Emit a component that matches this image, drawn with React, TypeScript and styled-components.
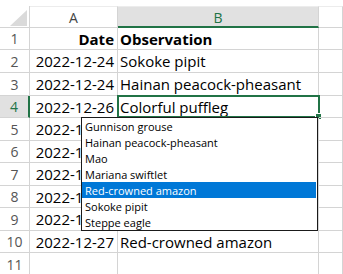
import React from 'react';
import styled, { createGlobalStyle } from 'styled-components';

const GlobalStyle = createGlobalStyle`
  html, body {
    margin: 0;
    padding: 0;
    background: #fff;
  }
  body {
    font-family: "Open Sans", "Liberation Sans", sans-serif;
    overflow: hidden;
  }
`

const GREEN = '#217346';
const GRID = '#d4d4d4';

const rowHeights = [22, 23, 23, 22, 23, 22, 23, 22, 23, 22, 23];

// rows 5-9 of column B sit under the open list, so they show nothing
const rows = [
  { date: 'Date', obs: 'Observation', bold: true },
  { date: '2022-12-24', obs: 'Sokoke pipit' },
  { date: '2022-12-24', obs: 'Hainan peacock-pheasant' },
  { date: '2022-12-26', obs: 'Colorful puffleg' },
  { date: '2022-12-26', obs: '' },
  { date: '2022-12-26', obs: '' },
  { date: '2022-12-27', obs: '' },
  { date: '2022-12-27', obs: '' },
  { date: '2022-12-27', obs: '' },
  { date: '2022-12-27', obs: 'Red-crowned amazon' },
  { date: '', obs: '' },
];

const options = [
  'Gunnison grouse',
  'Hainan peacock-pheasant',
  'Mao',
  'Mariana swiftlet',
  'Red-crowned amazon',
  'Sokoke pipit',
  'Steppe eagle',
];

const SELECTED_ROW = 4;
const HIGHLIGHT = 4;

const Sheet = styled.div`
  position: relative;
  padding-top: 6px;
  display: grid;
  grid-template-columns: 30px 88px 201px 1fr;
  grid-template-rows: 22px ${rowHeights.map(h => `${h}px`).join(' ')};
  width: 343px;
  height: 274px;
  box-sizing: border-box;
  overflow: hidden;
`

const Corner = styled.div`
  position: relative;
  border-right: 1px solid ${GRID};
  border-bottom: 1px solid ${GRID};
  box-sizing: border-box;

  &::after {
    content: '';
    position: absolute;
    left: 10px;
    top: 4px;
    width: 17px;
    height: 16px;
    background: #dadada;
    clip-path: polygon(100% 0, 100% 100%, 0 100%);
  }
`

const ColHeader = styled.div<{ active?: boolean }>`
  display: flex;
  align-items: center;
  justify-content: center;
  box-sizing: border-box;
  font-size: 14px;
  padding-top: 1px;
  color: ${p => p.active ? GREEN : '#444'};
  background: ${p => p.active ? '#e1e1e1' : '#fff'};
  border-top: 1px solid #ececec;
  border-right: 1px solid ${GRID};
  border-bottom: ${p => p.active ? `2px solid ${GREEN}` : `1px solid ${GRID}`};
`

const RowHeader = styled.div<{ active?: boolean }>`
  display: flex;
  align-items: center;
  justify-content: center;
  box-sizing: border-box;
  font-size: 14px;
  color: ${p => p.active ? GREEN : '#555'};
  background: ${p => p.active ? '#e1e1e1' : '#fff'};
  border-right: ${p => p.active ? `2px solid ${GREEN}` : `1px solid ${GRID}`};
  border-bottom: 1px solid ${GRID};
`

const Cell = styled.div<{ align?: 'left' | 'right'; bold?: boolean }>`
  position: relative;
  display: flex;
  align-items: center;
  justify-content: ${p => p.align === 'right' ? 'flex-end' : 'flex-start'};
  box-sizing: border-box;
  padding: ${p => p.align === 'right' ? '0 3px 0 0' : '0 0 0 2px'};
  font-size: 15px;
  font-weight: ${p => p.bold ? 700 : 400};
  color: #000;
  white-space: nowrap;
  overflow: visible;
  border-right: 1px solid ${GRID};
  border-bottom: 1px solid ${GRID};
`

const Selection = styled.div`
  position: absolute;
  left: -1px;
  top: -1px;
  right: -2px;
  bottom: -1px;
  border: 2px solid ${GREEN};
  pointer-events: none;
`

const FillHandle = styled.div`
  position: absolute;
  right: -4px;
  bottom: -4px;
  width: 5px;
  height: 5px;
  background: ${GREEN};
  border: 1px solid #fff;
`

const Dropdown = styled.ul`
  position: absolute;
  left: 81px;
  top: 117px;
  width: 237px;
  height: 114px;
  box-sizing: border-box;
  margin: 0;
  padding: 0;
  list-style: none;
  background: #fff;
  border: 1px solid #1a1a1a;
  z-index: 2;
`

const Option = styled.li<{ highlighted?: boolean }>`
  height: 16px;
  line-height: 16px;
  padding: 1px 0 0 3px;
  margin-right: 1px;
  box-sizing: border-box;
  font-size: 11px;
  white-space: nowrap;
  color: ${p => p.highlighted ? '#fff' : '#000'};
  background: ${p => p.highlighted ? '#0078d7' : 'transparent'};
`

export default function App() {
  return (
    <>
      <GlobalStyle />
      <Sheet>
        <Corner />
        <ColHeader>A</ColHeader>
        <ColHeader active>B</ColHeader>
        <ColHeader />
        {
          rows.map((row, idx) => {
            const n = idx + 1;
            const selected = n === SELECTED_ROW;
            return (
              <React.Fragment key={`row-${n}`}>
                <RowHeader active={selected}>{n}</RowHeader>
                <Cell align="right" bold={row.bold}>{row.date}</Cell>
                <Cell bold={row.bold}>
                  {row.obs}
                  {selected && (
                    <Selection>
                      <FillHandle />
                    </Selection>
                  )}
                </Cell>
                <Cell />
              </React.Fragment>
            );
          })
        }
        <Dropdown>
          {
            options.map((opt, idx) => (
              <Option key={opt} highlighted={idx === HIGHLIGHT}>{opt}</Option>
            ))
          }
        </Dropdown>
      </Sheet>
    </>
  );
}
